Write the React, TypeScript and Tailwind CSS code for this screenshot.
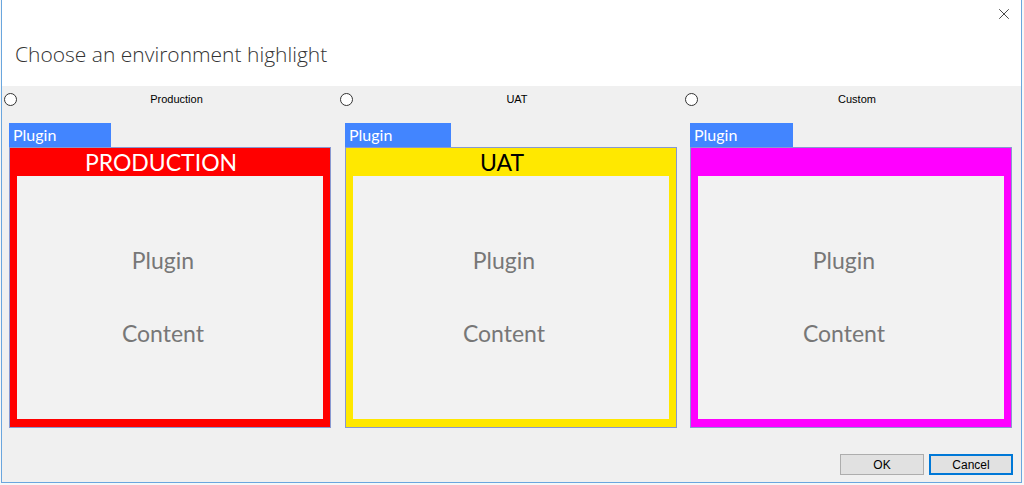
import { X } from 'lucide-react';

type Env = {
  label: string;
  header: string;
  color: string;
  headerText: string;
  colWidth: string;
  boxWidth: string;
  tabWidth: string;
};

const envs: Env[] = [
  {
    label: 'Production',
    header: 'PRODUCTION',
    color: 'bg-[#ff0000]',
    headerText: 'text-white',
    colWidth: 'w-[336px]',
    boxWidth: 'w-[322px]',
    tabWidth: 'w-[102px]',
  },
  {
    label: 'UAT',
    header: 'UAT',
    color: 'bg-[#ffe800]',
    headerText: 'text-black',
    colWidth: 'w-[345px]',
    boxWidth: 'w-[332px]',
    tabWidth: 'w-[106px]',
  },
  {
    label: 'Custom',
    header: '',
    color: 'bg-[#ff00ff]',
    headerText: 'text-black',
    colWidth: 'w-[335px]',
    boxWidth: 'w-[322px]',
    tabWidth: 'w-[103px]',
  },
];

const calibri = "font-['Lato','Open_Sans',sans-serif]";

function EnvColumn({ env }: { env: Env }) {
  return (
    <div className={`flex flex-col ${env.colWidth}`}>
      <div className="flex items-center h-[13px]">
        <span className="w-[13px] h-[13px] rounded-full border border-[#333] bg-white shrink-0" />
        <span className="flex-1 text-center text-[11px] leading-[13px] text-black font-['Liberation_Sans',Arial,sans-serif] pr-[4px]">
          {env.label}
        </span>
      </div>
      <div className="ml-[5px] mt-[17px] flex flex-col">
        <div
          className={`${env.tabWidth} h-[24px] bg-[#4285ff] text-white text-[16px] leading-[24px] pl-[4px] ${calibri}`}
        >
          Plugin
        </div>
        <div className={`${env.boxWidth} h-[281px] border border-[#8898d0] ${env.color} flex flex-col px-[7px] pb-[8px]`}>
          <div className={`h-[28px] text-center pr-[18px] text-[23px] leading-[28px] ${env.headerText} ${calibri}`}>
            {env.header}
          </div>
          <div className="flex-1 bg-[#f2f2f2] flex flex-col items-center justify-center gap-[42px] pr-[14px] pb-[2px]">
            <span className={`text-[23px] leading-[31px] text-[#777] ${calibri}`}>Plugin</span>
            <span className={`text-[23px] leading-[31px] text-[#777] ${calibri}`}>Content</span>
          </div>
        </div>
      </div>
    </div>
  );
}

export default function App() {
  return (
    <div className="w-[1024px] h-[485px] bg-[#f7f7f7] overflow-hidden">
      <div className="ml-[1px] w-[1021px] h-[483px] border-x border-b border-[#6aa6de] flex flex-col">
        <div className="h-[86px] bg-white relative">
          <h1 className="pl-[13px] pt-[40px] text-[21px] leading-[28px] font-light text-[#333] font-['Open_Sans',sans-serif]">
            Choose an environment highlight
          </h1>
          <X size={18} strokeWidth={1.1} className="absolute right-[8px] top-[5px] text-[#222]" />
        </div>
        <div className="flex-1 bg-[#f0f0f0] flex flex-col">
          <div className="flex pl-[2px] pt-[7px]">
            {envs.map((env) => (
              <EnvColumn key={env.label} env={env} />
            ))}
          </div>
          <div className="flex-1" />
          <div className="flex justify-end gap-[5px] pr-[8px] pb-[7px]">
            <button className="w-[84px] h-[21px] bg-[#e1e1e1] border border-[#adadad] text-[12px] text-black font-['Liberation_Sans',Arial,sans-serif]">
              OK
            </button>
            <button className="w-[84px] h-[21px] bg-[#e1e1e1] border-2 border-[#0078d7] text-[12px] text-black font-['Liberation_Sans',Arial,sans-serif]">
              Cancel
            </button>
          </div>
        </div>
      </div>
    </div>
  );
}
